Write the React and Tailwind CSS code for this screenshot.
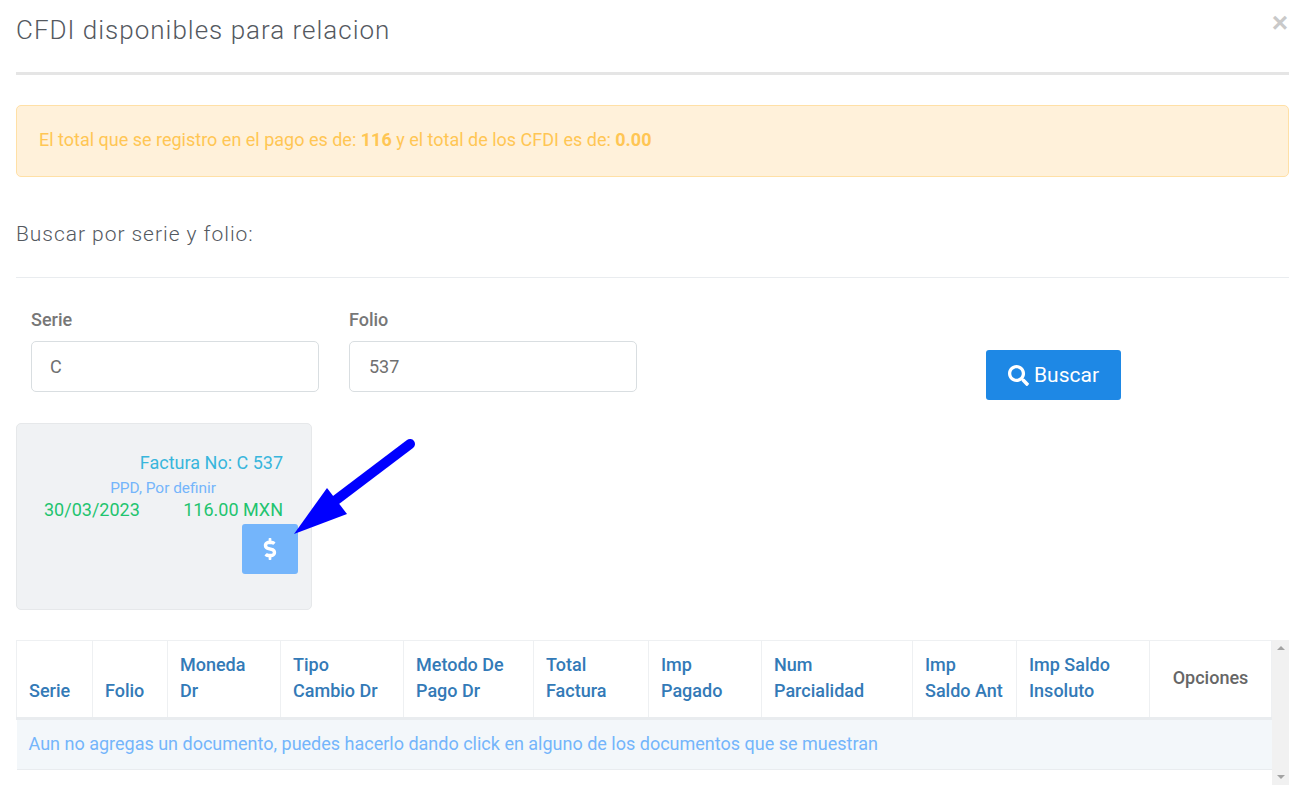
import React from 'react';
import { FaSearch, FaDollarSign } from 'react-icons/fa';

const columns = [
  { w: 'w-[76px]', lines: ['Serie'] },
  { w: 'w-[75px]', lines: ['Folio'] },
  { w: 'w-[113px]', lines: ['Moneda', 'Dr'] },
  { w: 'w-[123px]', lines: ['Tipo', 'Cambio Dr'] },
  { w: 'w-[130px]', lines: ['Metodo De', 'Pago Dr'] },
  { w: 'w-[115px]', lines: ['Total', 'Factura'] },
  { w: 'w-[113px]', lines: ['Imp', 'Pagado'] },
  { w: 'w-[151px]', lines: ['Num', 'Parcialidad'] },
  { w: 'w-[104px]', lines: ['Imp', 'Saldo Ant'] },
  { w: 'w-[133px]', lines: ['Imp Saldo', 'Insoluto'] },
];

export default function App() {
  return (
    <div className="relative h-[808px] w-[1304px] overflow-hidden bg-white pr-[15px] pl-4 font-['Roboto',sans-serif] text-[#666]">
      {/* Header */}
      <div className="flex h-[75px] items-start justify-between border-b-[3px] border-[#e5e5e5]">
        <h4 className="mt-[14px] text-[26px] leading-[33px] font-light tracking-[1px] text-[#54595f]">CFDI disponibles para relacion</h4>
        <span className="mt-[5px] mr-[1px] font-['Liberation_Sans',sans-serif] text-[28px] leading-[36px] font-bold text-[#c9c9c9]">×</span>
      </div>

      {/* Alert */}
      <div className="mt-[30px] flex h-[72px] items-center rounded-[5px] border border-[#ffe0a6] bg-[#fff1da] pb-[2px] pl-[22px] text-lg text-[#ffc654]">
        <span>El total que se registro en el pago es de: <b className="font-bold">116</b> y el total de los CFDI es de: <b className="font-bold">0.00</b></span>
      </div>

      <h5 className="mt-[44px] text-[21px] leading-[27px] font-light tracking-[0.96px] text-[#54595f]">Buscar por serie y folio:</h5>
      <hr className="mt-[29px] border-t border-[#e9ecef]" />

      {/* Search form */}
      <div className="mt-[30px] flex items-start pl-[15px]">
        <div className="w-[288px]">
          <label className="block text-lg leading-[24px] font-medium text-[#777]">Serie</label>
          <div className="mt-[9px] flex h-[51px] items-center rounded-[5px] border border-[#d9dee1] pl-[18px] text-lg text-[#707070]">C</div>
        </div>
        <div className="ml-[30px] w-[288px]">
          <label className="block text-lg leading-[24px] font-medium text-[#777]">Folio</label>
          <div className="mt-[9px] flex h-[51px] items-center rounded-[5px] border border-[#d9dee1] pl-[19px] text-lg text-[#707070]">537</div>
        </div>
        <button className="mt-[42px] ml-[349px] flex h-[50px] w-[135px] items-center justify-center gap-[5px] rounded-[3px] bg-[#1e88e5] text-[21px] text-white">
          <FaSearch className="h-[21px] w-[21px]" />
          <span className="relative top-[1px]">Buscar</span>
        </button>
      </div>

      {/* Invoice card */}
      <div className="mt-[23px] h-[187px] w-[296px] rounded-[5px] border border-[#e6e8ea] bg-[#f0f2f4] pt-[27px] pr-[28px]">
        <div className="text-right text-lg leading-[24px] text-[#38b6dc]">Factura No: C 537</div>
        <div className="mt-[3px] pr-[67px] text-right text-[15.4px] leading-[20px] text-[#74b5fb]">PPD, Por definir</div>
        <div className="flex justify-between pl-[27px] text-lg leading-[24px] text-[#1fc46f]">
          <span>30/03/2023</span>
          <span>116.00 MXN</span>
        </div>
        <div className="-mr-[15px] flex justify-end">
          <button className="mt-[2px] flex h-[50px] w-[56px] items-center justify-center rounded-[3px] bg-[#74b5fb] text-white">
            <FaDollarSign className="h-[22px] w-[22px]" />
          </button>
        </div>
      </div>

      {/* Table with scrollbar */}
      <div className="mt-[30px] flex h-[145px] items-start">
        <table className="w-[1256px] table-fixed border-collapse text-lg">
          <thead>
            <tr className="h-[78px] border-b-[3px] border-[#e9ecef]">
              {columns.map(col => (
                <th key={col.lines.join()} className={`${col.w} border border-b-0 border-[#eef0f2] px-3 pt-[11px] pb-[13px] text-left align-bottom leading-[26px] font-medium text-[#337ab7]`}>
                  {col.lines.map(l => <div key={l}>{l}</div>)}
                </th>
              ))}
              <th className="border border-b-0 border-[#eef0f2] pb-[2px] text-center align-middle font-medium text-[#666]">Opciones</th>
            </tr>
          </thead>
          <tbody>
            <tr className="h-[51px] border-b border-[#e9ecef] bg-[#f3f7fa]">
              <td colSpan={11} className="px-3 pb-[2px] text-[#74b5fb]">Aun no agregas un documento, puedes hacerlo dando click en alguno de los documentos que se muestran</td>
            </tr>
          </tbody>
        </table>
        <div className="flex h-[145px] w-[17px] flex-col items-center justify-between bg-[#f1f1f1] py-[6px]">
          <div className="h-0 w-0 border-x-4 border-b-4 border-x-transparent border-b-[#a3a3a3]" />
          <div className="h-0 w-0 border-x-4 border-t-4 border-x-transparent border-t-[#a3a3a3]" />
        </div>
      </div>

      {/* Annotation arrow drawn over the card */}
      <svg className="absolute top-[436px] left-[292px]" width="128" height="102" viewBox="0 0 128 102">
        <path d="M118 8 L44 64" stroke="#0000ff" strokeWidth="10" strokeLinecap="round" fill="none" />
        <path d="M2 98 L35 52 L55 78 Z" fill="#0000ff" />
      </svg>
    </div>
  );
}
